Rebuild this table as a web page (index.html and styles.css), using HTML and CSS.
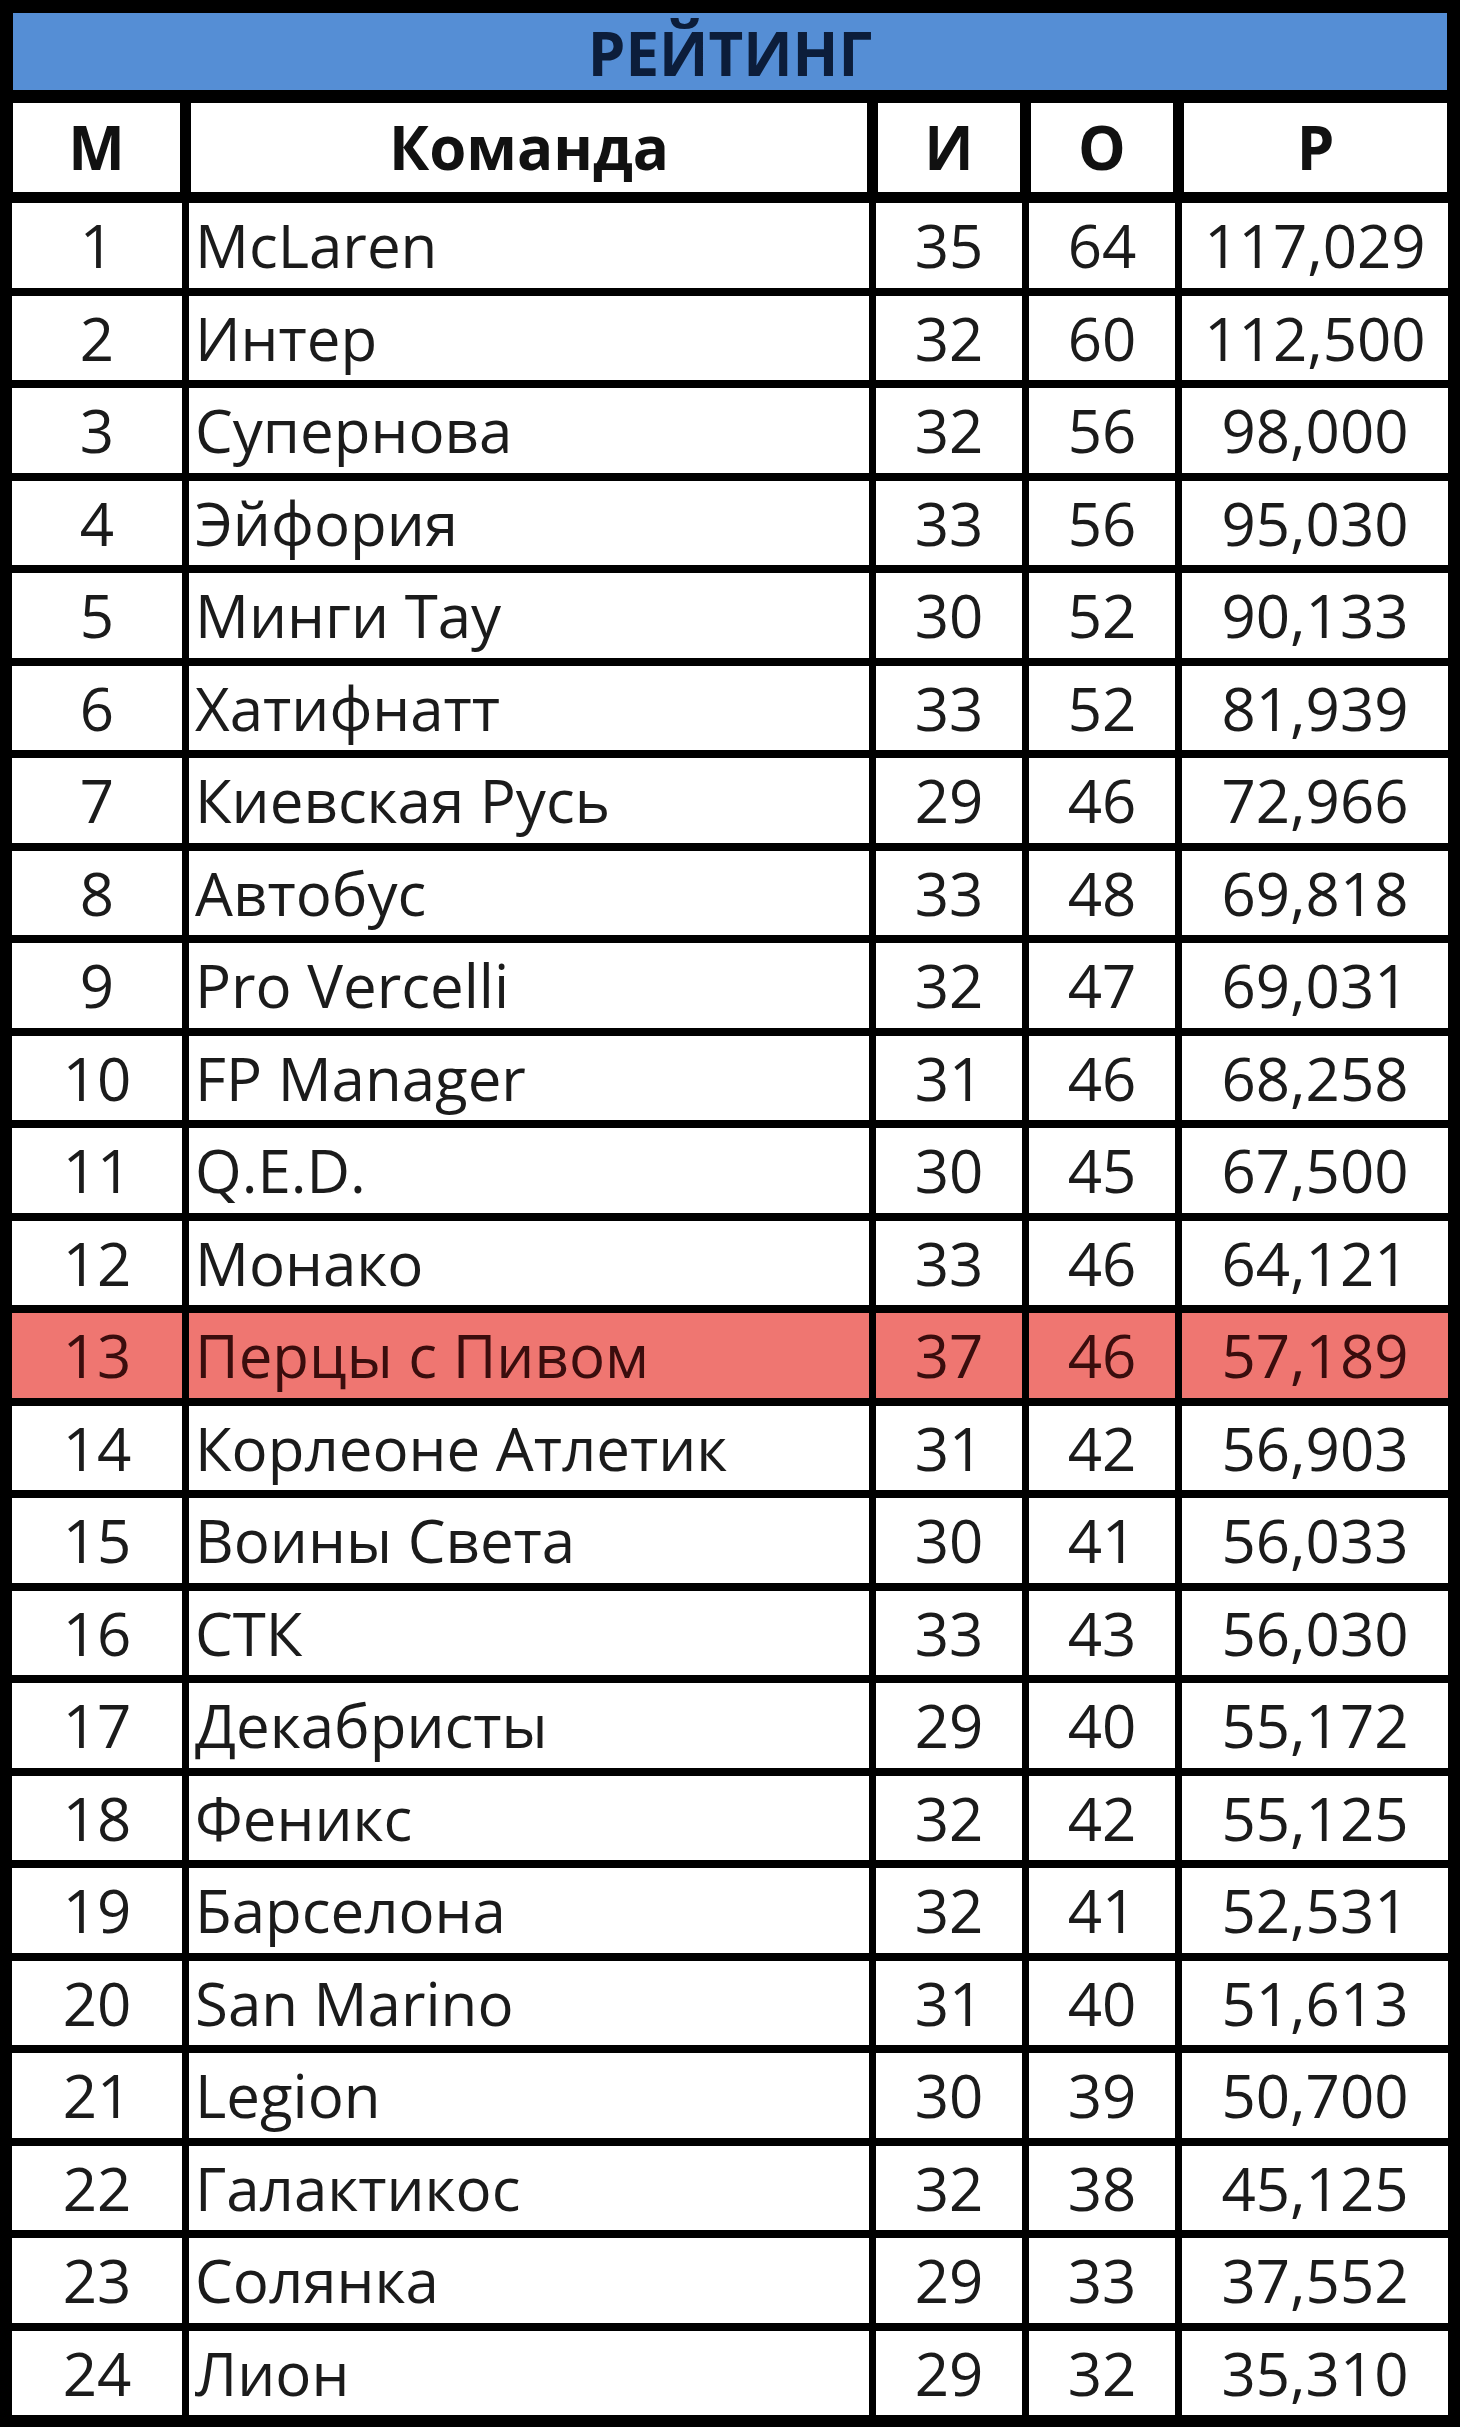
FILE: index.html
```html
<!DOCTYPE html>
<html lang="ru">
<head>
<meta charset="utf-8">
<title>Рейтинг</title>
<link rel="stylesheet" href="styles.css">
</head>
<body>
<div class="sheet">
  <div class="title">РЕЙТИНГ</div>
  <div class="row head">
    <div class="cell">М</div>
    <div class="cell">Команда</div>
    <div class="cell">И</div>
    <div class="cell">О</div>
    <div class="cell">Р</div>
  </div>
  <div class="rows">
    <div class="row"><div class="cell">1</div><div class="cell name">McLaren</div><div class="cell">35</div><div class="cell">64</div><div class="cell">117,029</div></div>
    <div class="row"><div class="cell">2</div><div class="cell name">Интер</div><div class="cell">32</div><div class="cell">60</div><div class="cell">112,500</div></div>
    <div class="row"><div class="cell">3</div><div class="cell name">Супернова</div><div class="cell">32</div><div class="cell">56</div><div class="cell">98,000</div></div>
    <div class="row"><div class="cell">4</div><div class="cell name">Эйфория</div><div class="cell">33</div><div class="cell">56</div><div class="cell">95,030</div></div>
    <div class="row"><div class="cell">5</div><div class="cell name">Минги Тау</div><div class="cell">30</div><div class="cell">52</div><div class="cell">90,133</div></div>
    <div class="row"><div class="cell">6</div><div class="cell name">Хатифнатт</div><div class="cell">33</div><div class="cell">52</div><div class="cell">81,939</div></div>
    <div class="row"><div class="cell">7</div><div class="cell name">Киевская Русь</div><div class="cell">29</div><div class="cell">46</div><div class="cell">72,966</div></div>
    <div class="row"><div class="cell">8</div><div class="cell name">Автобус</div><div class="cell">33</div><div class="cell">48</div><div class="cell">69,818</div></div>
    <div class="row"><div class="cell">9</div><div class="cell name">Pro Vercelli</div><div class="cell">32</div><div class="cell">47</div><div class="cell">69,031</div></div>
    <div class="row"><div class="cell">10</div><div class="cell name">FP Manager</div><div class="cell">31</div><div class="cell">46</div><div class="cell">68,258</div></div>
    <div class="row"><div class="cell">11</div><div class="cell name">Q.E.D.</div><div class="cell">30</div><div class="cell">45</div><div class="cell">67,500</div></div>
    <div class="row"><div class="cell">12</div><div class="cell name">Монако</div><div class="cell">33</div><div class="cell">46</div><div class="cell">64,121</div></div>
    <div class="row hl"><div class="cell">13</div><div class="cell name">Перцы с Пивом</div><div class="cell">37</div><div class="cell">46</div><div class="cell">57,189</div></div>
    <div class="row"><div class="cell">14</div><div class="cell name">Корлеоне Атлетик</div><div class="cell">31</div><div class="cell">42</div><div class="cell">56,903</div></div>
    <div class="row"><div class="cell">15</div><div class="cell name">Воины Света</div><div class="cell">30</div><div class="cell">41</div><div class="cell">56,033</div></div>
    <div class="row"><div class="cell">16</div><div class="cell name">СТК</div><div class="cell">33</div><div class="cell">43</div><div class="cell">56,030</div></div>
    <div class="row"><div class="cell">17</div><div class="cell name">Декабристы</div><div class="cell">29</div><div class="cell">40</div><div class="cell">55,172</div></div>
    <div class="row"><div class="cell">18</div><div class="cell name">Феникс</div><div class="cell">32</div><div class="cell">42</div><div class="cell">55,125</div></div>
    <div class="row"><div class="cell">19</div><div class="cell name">Барселона</div><div class="cell">32</div><div class="cell">41</div><div class="cell">52,531</div></div>
    <div class="row"><div class="cell">20</div><div class="cell name">San Marino</div><div class="cell">31</div><div class="cell">40</div><div class="cell">51,613</div></div>
    <div class="row"><div class="cell">21</div><div class="cell name">Legion</div><div class="cell">30</div><div class="cell">39</div><div class="cell">50,700</div></div>
    <div class="row"><div class="cell">22</div><div class="cell name">Галактикос</div><div class="cell">32</div><div class="cell">38</div><div class="cell">45,125</div></div>
    <div class="row"><div class="cell">23</div><div class="cell name">Солянка</div><div class="cell">29</div><div class="cell">33</div><div class="cell">37,552</div></div>
    <div class="row"><div class="cell">24</div><div class="cell name">Лион</div><div class="cell">29</div><div class="cell">32</div><div class="cell">35,310</div></div>
  </div>
</div>
</body>
</html>
```
FILE: styles.css
```css
html, body {
  margin: 0;
  padding: 0;
  background: #000;
}

body {
  width: 1460px;
  height: 2427px;
  overflow: hidden;
  font-family: "Open Sans", "Noto Sans", sans-serif;
  color: #1b1b1b;
}

.sheet {
  padding: 12px;
  display: flex;
  flex-direction: column;
}

.title {
  margin: 1px 1px 0 1px;
  height: 77px;
  box-sizing: border-box;
  padding-top: 4px;
  background: #558ed5;
  color: #0c1d3a;
  font-weight: 700;
  font-size: 60px;
  line-height: 73px;
  text-align: center;
}

.row {
  display: grid;
  grid-template-columns: 170px 680px 146px 146px 266px;
  column-gap: 7px;
  height: 84.5px;
}

.head {
  margin-top: 13px;
  height: 89px;
}

.rows {
  margin-top: 11px;
  display: flex;
  flex-direction: column;
  row-gap: 8px;
}

.cell {
  background: #fff;
  font-size: 60px;
  line-height: 84px;
  text-align: center;
  white-space: nowrap;
  overflow: hidden;
}

.head .cell {
  font-weight: 700;
  color: #111;
  line-height: 89px;
  border-left: 2px solid #000;
  border-right: 2px solid #000;
}

.head .cell:first-child {
  border-left-width: 1px;
}

.head .cell:last-child {
  border-right-width: 1px;
}

.cell.name {
  text-align: left;
  padding-left: 6px;
}

.hl .cell {
  background: #ef7671;
  color: #3a0d0d;
}
```
